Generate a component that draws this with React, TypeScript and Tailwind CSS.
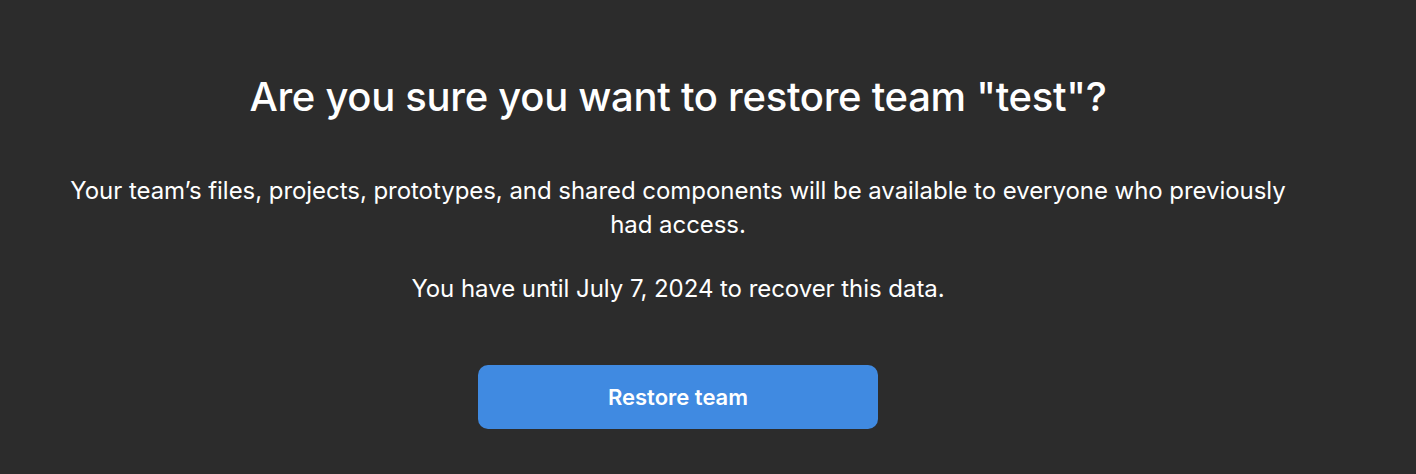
export default function App() {
  return (
    <div
      className="w-full h-[474px] bg-[#2c2c2c] text-white overflow-hidden"
      style={{ fontFamily: 'Inter, "Noto Sans", sans-serif' }}
    >
      <div className="w-[1356px] flex flex-col items-center pt-[72px]">
        <h1 className="text-[40px] leading-[50px] font-medium tracking-[-0.3px] text-white">
          Are you sure you want to restore team "test"?
        </h1>
        <p className="mt-[52px] max-w-[1250px] text-center text-[24px] leading-[34px] tracking-[-0.05px] text-white">
          Your team’s files, projects, prototypes, and shared components will be available to everyone who previously had access.
        </p>
        <p className="mt-[30px] text-center text-[24px] leading-[34px] tracking-[-0.05px] text-white">
          You have until July 7, 2024 to recover this data.
        </p>
        <button className="mt-[59px] w-[400px] h-[64px] rounded-[10px] bg-[#408ae1] text-white text-[22px] font-semibold">
          Restore team
        </button>
      </div>
    </div>
  );
}
